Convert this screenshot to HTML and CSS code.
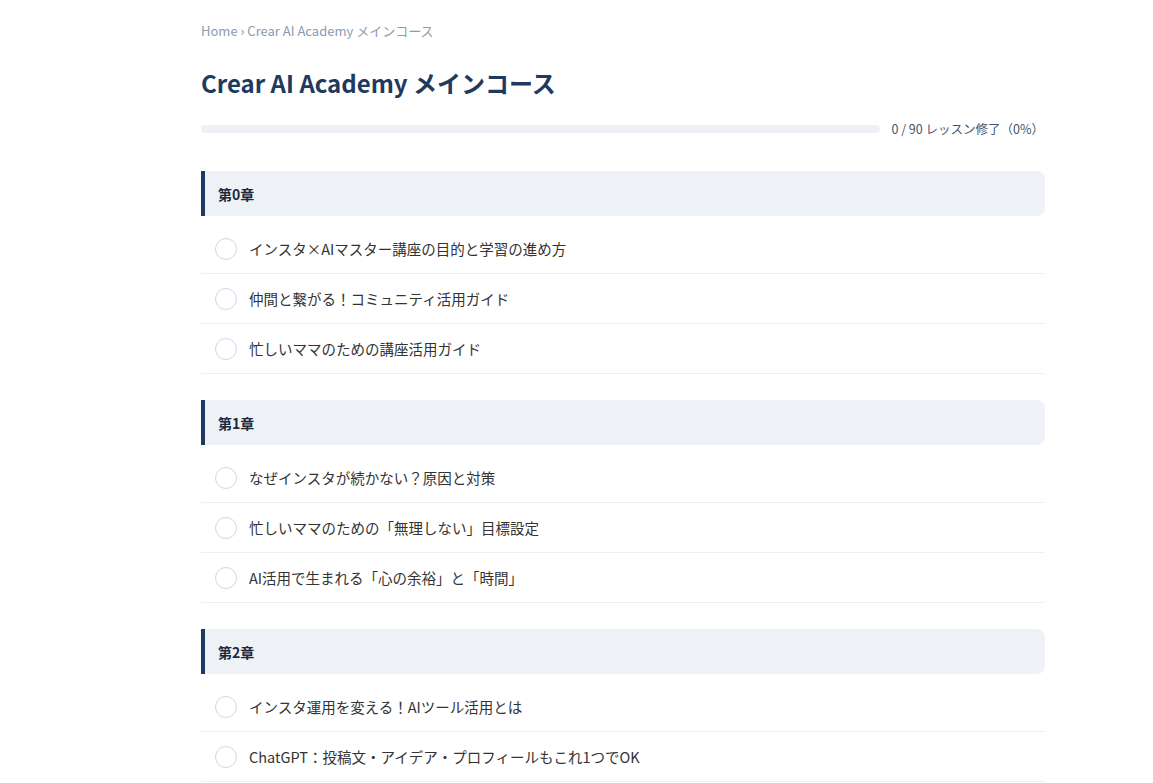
FILE: index.html
```html
<!DOCTYPE html>
<html lang="ja">
<head>
  <meta charset="UTF-8" />
  <meta name="viewport" content="width=device-width, initial-scale=1" />
  <title>Crear AI Academy メインコース</title>
  <link rel="stylesheet" href="styles.css">
</head>
<body>
  <main class="curso">
    <nav class="breadcrumb">
      <a href="#">Home</a> › <span>Crear AI Academy メインコース</span>
    </nav>

    <h1>Crear AI Academy メインコース</h1>

    <div class="progresso">
      <div class="barra"><div class="preenchido" style="width: 0%"></div></div>
      <span class="progresso-texto">0 / 90 レッスン修了（0%）</span>
    </div>

    <section class="capitulo">
      <h2>第0章</h2>
      <ul class="licoes">
        <li><span class="check"></span>インスタ×AIマスター講座の目的と学習の進め方</li>
        <li><span class="check"></span>仲間と繋がる！コミュニティ活用ガイド</li>
        <li><span class="check"></span>忙しいママのための講座活用ガイド</li>
      </ul>
    </section>

    <section class="capitulo">
      <h2>第1章</h2>
      <ul class="licoes">
        <li><span class="check"></span>なぜインスタが続かない？原因と対策</li>
        <li><span class="check"></span>忙しいママのための「無理しない」目標設定</li>
        <li><span class="check"></span>AI活用で生まれる「心の余裕」と「時間」</li>
      </ul>
    </section>

    <section class="capitulo">
      <h2>第2章</h2>
      <ul class="licoes">
        <li><span class="check"></span>インスタ運用を変える！AIツール活用とは</li>
        <li><span class="check"></span>ChatGPT：投稿文・アイデア・プロフィールもこれ1つでOK</li>
      </ul>
    </section>
  </main>
</body>
</html>
```

FILE: styles.css
```css
body {
  font-family: "Noto Sans CJK JP", "Noto Sans", sans-serif;
  background: #fff;
  margin: 0;
  color: #333;
}

.curso {
  width: 844px;
  margin-left: 201px;
  padding-top: 21px;
}

.breadcrumb {
  font-size: 13px;
  line-height: 20px;
  color: #8a9ab0;
}

.breadcrumb a {
  color: #8a9ab0;
  text-decoration: none;
}

h1 {
  margin: 25px 0 0;
  font-size: 24px;
  line-height: 34px;
  font-weight: 700;
  color: #1e3a5f;
}

.progresso {
  display: flex;
  align-items: center;
  gap: 11px;
  margin-top: 19px;
}

.barra {
  flex: 1;
  height: 8px;
  background: #edf1f6;
  border-radius: 4px;
  overflow: hidden;
}

.preenchido {
  height: 100%;
  background: #1e3a5f;
}

.progresso-texto {
  font-size: 12.5px;
  line-height: 20px;
  color: #475569;
  margin-right: 1px;
}

.capitulo {
  margin-top: 26px;
}

.capitulo:first-of-type {
  margin-top: 32px;
}

.capitulo h2 {
  margin: 0;
  height: 45px;
  padding-left: 13px;
  display: flex;
  align-items: center;
  font-size: 14px;
  font-weight: 700;
  color: #1e293b;
  background: #eef2f7;
  border-left: 4px solid #1e3a5f;
  border-radius: 0 8px 8px 0;
}

.licoes {
  list-style: none;
  margin: 8px 0 0;
  padding: 0;
}

.licoes li {
  display: flex;
  align-items: center;
  gap: 12px;
  height: 49px;
  padding-left: 14px;
  font-size: 14.5px;
  color: #333;
  border-bottom: 1px solid #eef0f5;
}

.check {
  width: 20px;
  height: 20px;
  border: 1.5px solid #cbd9e8;
  border-radius: 50%;
  flex-shrink: 0;
}
```
